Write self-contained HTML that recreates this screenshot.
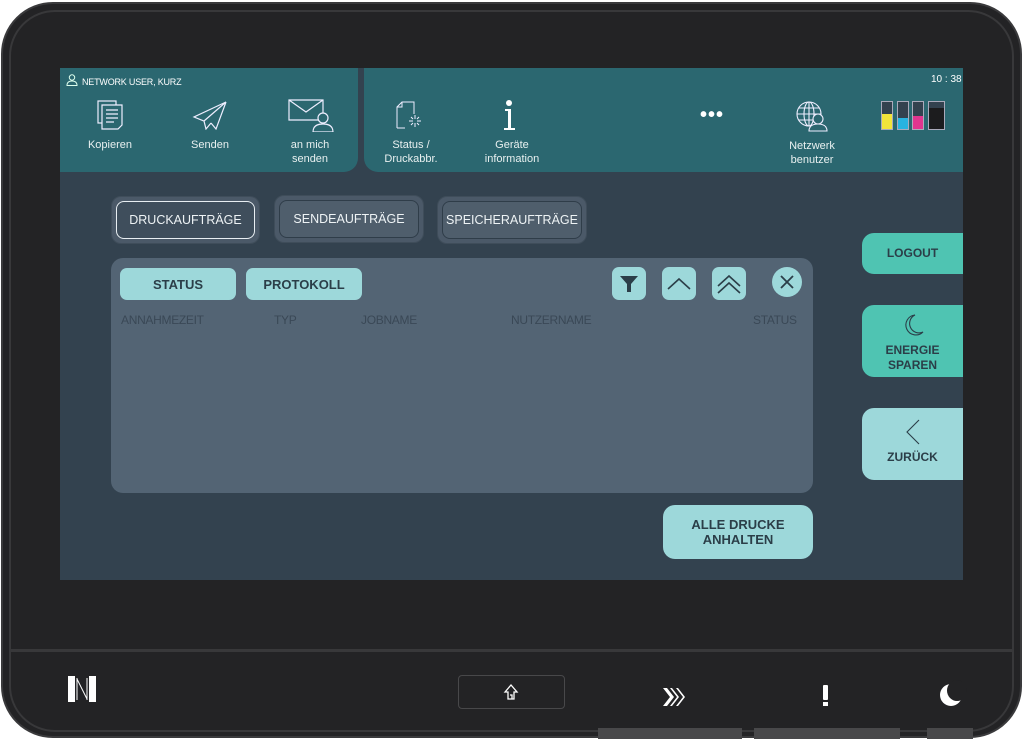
<!DOCTYPE html>
<html><head><meta charset="utf-8"><style>
*{margin:0;padding:0;box-sizing:border-box}
body{width:1024px;height:739px;background:#fff;position:relative;overflow:hidden;font-family:"Liberation Sans",Arial,sans-serif}
.abs{position:absolute}
.dev{left:1px;top:2px;width:1021px;height:736px;background:#232325;border-radius:52px;border:2px solid #3a3a3c}
.inner{left:9px;top:10px;width:1005px;height:722px;border:2px solid #38383a;border-radius:46px}
.screen{left:60px;top:68px;width:903px;height:512px;background:#33424f}
.hl{left:60px;top:68px;width:298px;height:104px;background:#2b6770;border-bottom-right-radius:14px}
.hr{left:364px;top:68px;width:599px;height:104px;background:#2b6770;border-bottom-left-radius:14px}
.lbl{color:#e8f0f0;font-size:11px;text-align:center;line-height:14px;width:90px}
.tab{height:48px;border-radius:10px;background:#4b5968;border:1px solid #3f4d5a;padding:4px}
.tab div{height:100%;border-radius:8px;border:1px solid #2f3d49;color:#eef3f5;font-size:12.5px;display:flex;align-items:center;justify-content:center;white-space:nowrap}
.pill{background:#9dd8da;color:#2b3e48;font-size:13px;border-radius:7px;display:flex;align-items:center;justify-content:center;font-weight:bold}
.th{color:#3a4856;font-size:12px;top:313px;letter-spacing:-.3px}
.ib{width:34px;height:33px;border-radius:7px;background:#9dd8da;top:267px}
.side{left:862px;width:101px;border-radius:12px 0 0 12px;color:#2b3e48;font-size:12px;font-weight:bold;text-align:center}
</style></head><body>
<div class="abs dev"></div>
<div class="abs inner"></div>
<div class="abs" style="left:10px;top:649px;width:1004px;height:3px;background:#38383a"></div>
<div class="abs screen"></div>
<div class="abs hl"></div>
<div class="abs hr"></div>
<svg class="abs" style="left:66px;top:74px" width="12" height="12" viewBox="0 0 12 12" fill="none" stroke="#dfe" stroke-width="1"><circle cx="6" cy="3.5" r="2.7"/><path d="M1 11.5c0-3 2-4.5 5-4.5s5 1.5 5 4.5z"/></svg>
<div class="abs" style="left:82px;top:77px;color:#fff;font-size:9px;letter-spacing:-.2px">NETWORK USER, KURZ</div>
<svg class="abs" style="left:96px;top:99px" width="30" height="32" viewBox="0 0 30 32" fill="none" stroke="#eef" stroke-width="1.2"><rect x="2" y="2" width="18" height="22"/><path d="M6 6h20v20l-4 4H6z" fill="#2b6770"/><path d="M10 11h12M10 15h12M10 19h12M10 23h8"/></svg>
<div class="abs lbl" style="left:65px;top:138px">Kopieren</div>
<svg class="abs" style="left:192px;top:100px" width="36" height="30" viewBox="0 0 36 30" fill="none" stroke="#eef" stroke-width="1.2"><path d="M34 2L2 17l10 4zM34 2L12 21l2 8 5-6M34 2l-10 27-5-6"/></svg>
<div class="abs lbl" style="left:165px;top:138px">Senden</div>
<svg class="abs" style="left:288px;top:98px" width="46" height="34" viewBox="0 0 46 34" fill="none" stroke="#eef" stroke-width="1.2"><path d="M1 2h34v20H1zM1 2l17 12 17-12"/><circle cx="35" cy="20" r="5" fill="#2b6770"/><path d="M25 34c0-6 4-8 10-8s10 2 10 8z" fill="#2b6770"/></svg>
<div class="abs lbl" style="left:265px;top:138px">an mich<br>senden</div>
<svg class="abs" style="left:395px;top:101px" width="32" height="30" viewBox="0 0 32 30" fill="none" stroke="#eef" stroke-width="1"><path d="M2 27V6l5-5h12v12M2 27h8M7 1v5H2"/><path d="M20 14v4M20 22v4M14 20h4M22 20h4M16 16l2 2M22 22l2 2M24 16l-2 2M16 24l2-2"/></svg>
<div class="abs lbl" style="left:366px;top:138px">Status /<br>Druckabbr.</div>
<div class="abs" style="left:506px;top:100px;width:6px;height:6px;border-radius:3px;background:#fff"></div>
<div class="abs" style="left:508px;top:109px;width:3px;height:20px;background:#fff"></div>
<div class="abs" style="left:505px;top:109px;width:6px;height:2px;background:#fff"></div>
<div class="abs" style="left:504px;top:128px;width:11px;height:2px;background:#fff"></div>
<div class="abs lbl" style="left:467px;top:138px">Geräte<br>information</div>
<div class="abs" style="left:700px;top:110px;color:#fff;font-size:20px;letter-spacing:1px;line-height:10px;font-weight:bold">•••</div>
<svg class="abs" style="left:795px;top:100px" width="34" height="32" viewBox="0 0 34 32" fill="none" stroke="#eef" stroke-width="1.1"><circle cx="14" cy="14" r="12"/><ellipse cx="14" cy="14" rx="5" ry="12"/><path d="M2 14h24M4 8h20M4 20h20M14 2v24"/><circle cx="23" cy="19" r="5" fill="#2b6770"/><path d="M14 31c0-5 4-7 9-7s9 2 9 7z" fill="#2b6770"/></svg>
<div class="abs lbl" style="left:767px;top:139px">Netzwerk<br>benutzer</div>
<div class="abs" style="left:931px;top:74px;color:#fff;font-size:10px">10 : 38</div>
<div class="abs" style="left:881px;top:101px;width:12px;height:29px;border:1px solid #aab;background:#33424f"><div class="abs" style="left:0;bottom:0;width:10px;height:15px;background:#f2e43a"></div></div>
<div class="abs" style="left:897px;top:101px;width:12px;height:29px;border:1px solid #aab;background:#33424f"><div class="abs" style="left:0;bottom:0;width:10px;height:11px;background:#28b3e0"></div></div>
<div class="abs" style="left:912px;top:101px;width:12px;height:29px;border:1px solid #aab;background:#33424f"><div class="abs" style="left:0;bottom:0;width:10px;height:13px;background:#e0358f"></div></div>
<div class="abs" style="left:928px;top:101px;width:17px;height:29px;border:1px solid #aab;background:#33424f"><div class="abs" style="left:0;bottom:0;width:15px;height:21px;background:#1c1c1e"></div></div>
<div class="abs tab" style="left:111px;top:196px;width:149px"><div style="border:1.5px solid #e8eef2;background:#3f4e5c">DRUCKAUFTRÄGE</div></div>
<div class="abs tab" style="left:274px;top:195px;width:150px"><div style="background:#4f5e6c">SENDEAUFTRÄGE</div></div>
<div class="abs tab" style="left:437px;top:196px;width:150px"><div style="background:#4f5e6c">SPEICHERAUFTRÄGE</div></div>
<div class="abs" style="left:111px;top:258px;width:702px;height:235px;background:#536474;border-radius:12px"></div>
<div class="abs pill" style="left:120px;top:268px;width:116px;height:32px">STATUS</div>
<div class="abs pill" style="left:246px;top:268px;width:116px;height:32px">PROTOKOLL</div>
<div class="abs ib" style="left:612px"><svg width="34" height="33" viewBox="0 0 34 33"><path d="M8 9h18l-7 8v8h-4v-8z" fill="#2b3e48"/></svg></div>
<div class="abs ib" style="left:662px"><svg width="34" height="33" viewBox="0 0 34 33" fill="none" stroke="#2b3e48" stroke-width="1.6"><path d="M6 22l11-10 11 10"/></svg></div>
<div class="abs ib" style="left:712px"><svg width="34" height="33" viewBox="0 0 34 33" fill="none" stroke="#2b3e48" stroke-width="1.6"><path d="M6 19l11-10 11 10M6 26l11-10 11 10"/></svg></div>
<div class="abs" style="left:772px;top:267px;width:30px;height:30px;border-radius:15px;background:#9dd8da"><svg width="30" height="30" viewBox="0 0 30 30" stroke="#2b3e48" stroke-width="1.8"><path d="M9 9l12 12M21 9L9 21"/></svg></div>
<div class="abs th" style="left:121px">ANNAHMEZEIT</div>
<div class="abs th" style="left:274px">TYP</div>
<div class="abs th" style="left:361px">JOBNAME</div>
<div class="abs th" style="left:511px">NUTZERNAME</div>
<div class="abs th" style="left:753px">STATUS</div>
<div class="abs pill" style="left:663px;top:505px;width:150px;height:54px;border-radius:12px;line-height:15px;text-align:center">ALLE DRUCKE<br>ANHALTEN</div>
<div class="abs side" style="top:233px;height:41px;background:#4fc4b2;line-height:41px">LOGOUT</div>
<div class="abs side" style="top:305px;height:72px;background:#4fc4b2;line-height:15px;padding-top:8px"><svg width="24" height="26" viewBox="0 0 24 26" fill="none" stroke="#2b3e48" stroke-width="1.1"><path d="M14 2a10 10 0 1 0 8 17A9 9 0 0 1 14 2z"/></svg><br>ENERGIE<br>SPAREN</div>
<div class="abs side" style="top:408px;height:72px;background:#9dd8da;padding-top:10px;line-height:15px"><svg width="20" height="28" viewBox="0 0 20 28" fill="none" stroke="#2b3e48" stroke-width="1.1"><path d="M16 2L4 14l12 12"/></svg><br>ZURÜCK</div>
<div class="abs" style="left:68px;top:676px;width:28px;height:26px;background:#fff"><svg width="28" height="26" viewBox="0 0 28 26"><rect x="7" y="0" width="14" height="26" fill="#232325"/><path d="M9 2v22M19 2v22M9 3l10 20" stroke="#fff" stroke-width="1"/></svg></div>
<div class="abs" style="left:458px;top:675px;width:107px;height:34px;border:1px solid #48484a;border-radius:4px"></div>
<svg class="abs" style="left:503px;top:683px" width="16" height="18" viewBox="0 0 16 18" fill="none" stroke="#fff" stroke-width="1.3"><path d="M2 9L8 2l6 7h-3v7H5V9z"/><path d="M7 12h2v4"/></svg>
<svg class="abs" style="left:662px;top:686px" width="26" height="22" viewBox="0 0 26 22" fill="#fff"><path d="M1 2h4l7 9-7 9H1l7-9z"/><path d="M8 2h2l7 9-7 9H8l7-9zM14 2h2l7 9-7 9h-2l7-9z"/></svg>
<div class="abs" style="left:823px;top:685px;width:5px;height:15px;background:#fff;border-radius:1px"></div>
<div class="abs" style="left:823px;top:702px;width:5px;height:4px;background:#fff"></div>
<div class="abs" style="left:940px;top:684px;width:22px;height:22px;border-radius:50%;background:#fff"></div>
<div class="abs" style="left:947px;top:680px;width:20px;height:21px;border-radius:50%;background:#232325"></div>
<div class="abs" style="left:598px;top:728px;width:144px;height:11px;background:#48484a"></div>
<div class="abs" style="left:754px;top:728px;width:146px;height:11px;background:#48484a"></div>
<div class="abs" style="left:927px;top:728px;width:46px;height:11px;background:#48484a"></div>
</body></html>
